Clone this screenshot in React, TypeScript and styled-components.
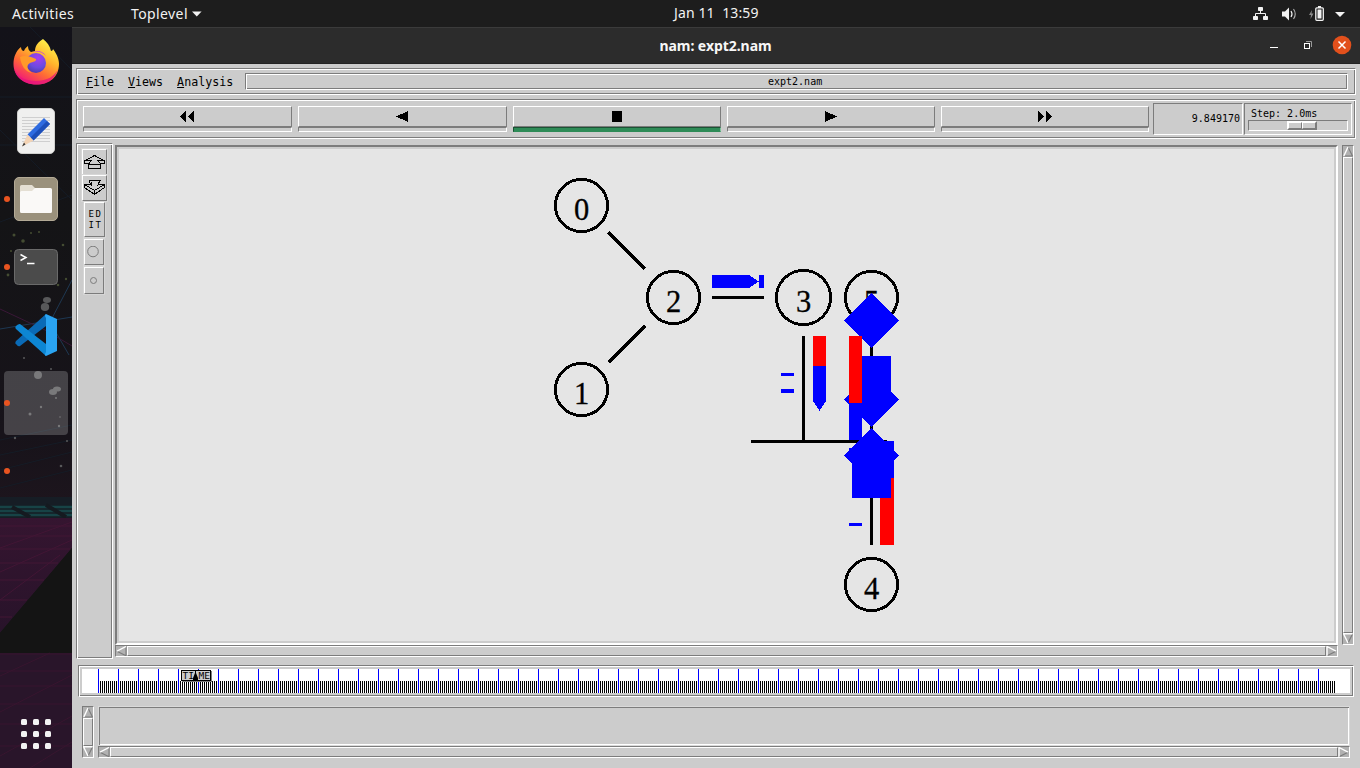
import React from "react";
import styled, { createGlobalStyle, css } from "styled-components";

const FACE = "#cccccc";
const DARK = "#7c7c7c";
const LIGHT = "#ffffff";

const GlobalStyle = createGlobalStyle`
  * { box-sizing: border-box; }
  html, body { margin: 0; padding: 0; overflow: hidden; }
  svg { display: block; flex: none; }
`;

const groove = css`
  border: 1px solid;
  border-color: ${DARK} ${LIGHT} ${LIGHT} ${DARK};
  box-shadow: inset 1px 1px ${LIGHT}, inset -1px -1px ${DARK};
`;
const raised = css`
  border: 1px solid;
  border-color: ${LIGHT} ${DARK} ${DARK} ${LIGHT};
`;
const sunken = css`
  border: 1px solid;
  border-color: ${DARK} ${LIGHT} ${LIGHT} ${DARK};
`;
const tiny = css`
  font: 10px/10px "DejaVu Sans Mono", monospace;
  white-space: pre;
  color: #000;
`;

const Desktop = styled.div`
  width: 1360px;
  height: 768px;
  display: flex;
  flex-direction: column;
  background: #141414;
  font-family: "Noto Sans", sans-serif;
`;

const TopBar = styled.header`
  height: 27px;
  flex: none;
  display: grid;
  grid-template-columns: 131px 543px 1fr auto;
  align-items: center;
  background: #1d1d1d;
  color: #f2f2f2;
  font-size: 14px;
  line-height: 26px;
  white-space: pre;
`;
const Activities = styled.span`
  padding-left: 12px;
  letter-spacing: 0.38px;
`;
const AppMenu = styled.span`
  display: flex;
  align-items: center;
  gap: 4px;
  letter-spacing: 0.4px;
`;
const Clock = styled.span`
  letter-spacing: 0.12px;
  line-height: 25px;
  margin-top: -2px;
`;
const Tray = styled.span`
  display: flex;
  align-items: center;
  padding-right: 15px;
`;

const Below = styled.div`
  flex: 1;
  display: flex;
  min-height: 0;
`;

const Dock = styled.nav`
  position: relative;
  width: 72px;
  flex: none;
  display: flex;
  flex-direction: column;
  padding-top: 1px;
  overflow: hidden;
`;
const Wallpaper = styled.svg`
  position: absolute;
  left: 0;
  top: 0;
`;
const DockItem = styled.div<{ $running?: boolean; $first?: boolean }>`
  position: relative;
  height: 68px;
  flex: none;
  margin-bottom: ${(p) => (p.$first ? 1 : 0)}px;
  display: flex;
  align-items: center;
  justify-content: center;
  ${(p) =>
    p.$running &&
    css`
      &::before {
        content: "";
        position: absolute;
        z-index: 1;
        left: 4px;
        top: 31px;
        width: 6px;
        height: 6px;
        border-radius: 3px;
        background: #e95420;
      }
    `}
`;
const Highlight = styled.div`
  width: 64px;
  height: 64px;
  border-radius: 4px;
  background: rgba(255, 255, 255, 0.2);
`;
const AppsGrid = styled.div`
  position: relative;
  margin: auto auto 19px;
  display: grid;
  grid-template-columns: repeat(3, 6px);
  gap: 6px;
`;
const AppsDot = styled.i`
  width: 6px;
  height: 6px;
  border-radius: 1.5px;
  background: #f2f2f2;
`;

const Window = styled.main`
  flex: 1;
  display: flex;
  flex-direction: column;
  background: ${FACE};
`;
const TitleBar = styled.div`
  height: 37px;
  flex: none;
  display: grid;
  grid-template-columns: 1fr auto 1fr;
  align-items: center;
  background: #2c2c2c;
  border-top: 1px solid #3b3b3b;
  border-bottom: 1px solid #232323;
  color: #f7f7f7;
`;
const Title = styled.h1`
  grid-column: 2;
  margin: 0 1px 0 0;
  font-size: 14px;
  line-height: 34px;
  font-weight: 700;
  letter-spacing: -0.05px;
`;
const Controls = styled.div`
  display: flex;
  justify-content: flex-end;
  align-items: center;
  padding-right: 8px;
`;

const Body = styled.div`
  flex: 1;
  display: flex;
  flex-direction: column;
  padding: 4px 4px 0;
`;
const MenuBar = styled.div`
  ${groove}
  height: 27px;
  flex: none;
  display: flex;
  align-items: center;
  padding: 0 7px 0 9px;
`;
const Menu = styled.span`
  font: 11.65px/15px "DejaVu Sans Mono", monospace;
  margin-right: 14px;
  padding-top: 2px;
  color: #000;
`;
const FileLabel = styled.div`
  ${groove}
  ${tiny}
  flex: 1;
  height: 17px;
  margin-left: -2px;
  padding: 1px 3px 0 0;
  text-align: center;
  line-height: 14px;
`;

const Toolbar = styled.div`
  ${groove}
  height: 40px;
  flex: none;
  display: flex;
  margin-top: 4px;
  padding: 3px 3px 0 6px;
`;
const Buttons = styled.div`
  display: grid;
  grid-template-columns: 209px 209px 208px 208px 208px;
  gap: 6px;
  padding-top: 3px;
  margin-right: 4px;
`;
const Transport = styled.div`
  height: 26px;
`;
const TransportFace = styled.div`
  ${raised}
  height: 21px;
  display: flex;
  align-items: center;
  justify-content: center;
  padding-right: 1px;
`;
const TransportStrip = styled.div<{ $active?: boolean }>`
  ${sunken}
  height: 5px;
  ${(p) =>
    p.$active &&
    css`
      background: #2e8b57;
      border-color: #1b5334 #82c09c #2e8b57 #1b5334;
    `}
`;
const TimeBox = styled.div`
  ${sunken}
  ${tiny}
  width: 90px;
  height: 32px;
  padding: 10px 2px 0 0;
  text-align: right;
`;
const StepBox = styled.div`
  ${sunken}
  ${tiny}
  width: 108px;
  height: 32px;
  margin-left: 1px;
  padding: 5px 3px 0;
`;
const StepText = styled.div`
  padding-left: 3px;
  height: 11px;
`;
const Trough = styled.div`
  ${sunken}
  width: 100px;
  height: 11px;
  padding-left: 38px;
`;
const Thumb = styled.div`
  display: flex;
  width: 30px;
  height: 9px;
  border: 1px solid;
  border-color: ${LIGHT} ${DARK} ${DARK} ${LIGHT};
`;
const ThumbHalf = styled.i`
  ${raised}
  flex: 1;
`;

const Workspace = styled.div`
  display: flex;
  height: 516px;
  flex: none;
  margin-top: 4px;
`;
const ToolPanel = styled.aside`
  ${groove}
  width: 37px;
  padding-top: 5px;
  display: flex;
  flex-direction: column;
  align-items: flex-start;
`;
const ToolButton = styled.div<{ $w: number; $h: number; $x: number; $gap?: number }>`
  ${raised}
  ${tiny}
  width: ${(p) => p.$w}px;
  height: ${(p) => p.$h}px;
  margin: ${(p) => p.$gap ?? 0}px 0 0 ${(p) => p.$x}px;
  display: flex;
  align-items: center;
  justify-content: center;
  box-shadow: 0 0 0 1px #d6d6d6;
`;
const EditLabel = styled.span`
  padding-left: 2px;
  line-height: 11px;
  font-size: 9px;
  letter-spacing: 1.6px;
`;
const CanvasColumn = styled.section`
  margin: 2px 4px 0 2px;
  width: 1223px;
`;
const Canvas = styled.div`
  height: 500px;
  border: 2px solid;
  border-color: ${DARK} ${LIGHT} ${LIGHT} ${DARK};
  padding: 2px;
`;
const Topology = styled.svg`
  background: #e5e5e5;
`;

const Bar = styled.div<{ $vertical?: boolean; $size: number }>`
  ${sunken}
  background: #b1b1b1;
  display: flex;
  flex: none;
  flex-direction: ${(p) => (p.$vertical ? "column" : "row")};
  width: ${(p) => (p.$vertical ? 12 : p.$size)}px;
  height: ${(p) => (p.$vertical ? p.$size : 12)}px;
`;
const BarThumb = styled.div`
  ${raised}
  flex: 1;
  background: ${FACE};
`;
const MainVertical = styled.div`
  margin-top: 2px;
`;

const Timeline = styled.div`
  ${groove}
  width: 1276px;
  height: 32px;
  flex: none;
  margin: 6px 0 0 2px;
  padding: 3px;
`;
const TimelineFace = styled.div`
  position: relative;
  height: 24px;
  background: #fff;
  padding-left: 16px;
`;
const Ticks = styled.div`
  width: 1237px;
  height: 24px;
  background:
    repeating-linear-gradient(90deg, #0000ff 0 1px, transparent 1px 20px),
    repeating-linear-gradient(90deg, #000 0 1px, transparent 1px 2px) 0 12px / 100% 12px no-repeat;
`;
const TimeMarker = styled.div`
  position: absolute;
  left: 99px;
  top: 1px;
`;

const Footer = styled.div`
  display: flex;
  gap: 4px;
  margin: 9px 0 0 6px;
`;
const NotePane = styled.div`
  width: 1252px;
  height: 40px;
  border: 1px solid #d9d9d9;
  box-shadow: inset 1px 1px ${DARK}, inset -1px -1px ${LIGHT};
`;

type Dir = "left" | "right" | "up" | "down";
const arrows: Record<Dir, [string, string]> = {
  left: ["M10 0.5 L1 5.2", "M1 5.2 L10 9.8 V0.5"],
  right: ["M1 9.8 V0.5 L10 5.2", "M10 5.2 L1 9.8"],
  up: ["M0.8 10 L5 1", "M5 1 L9.5 10 H0.8"],
  down: ["M9.5 0.8 H0.5 L5 10", "M5 10 L9.5 1"],
};
function Arrow({ dir }: { dir: Dir }) {
  const wide = dir === "left" || dir === "right";
  return (
    <svg width={wide ? 11 : 10} height={wide ? 10 : 11} fill="none" strokeWidth="1.1">
      <path d={arrows[dir][1]} stroke={DARK} />
      <path d={arrows[dir][0]} stroke={LIGHT} strokeWidth="1.4" />
    </svg>
  );
}
function Scrollbar({ vertical, size }: { vertical?: boolean; size: number }) {
  return (
    <Bar $vertical={vertical} $size={size}>
      <Arrow dir={vertical ? "up" : "left"} />
      <BarThumb />
      <Arrow dir={vertical ? "down" : "right"} />
    </Bar>
  );
}

const transports = [
  { id: "rewind", d: "M0 5.5 L6 0 V11Z M8 5.5 L14 0 V11Z", w: 14 },
  { id: "back", d: "M0 5.5 L12 0 V11Z", w: 12 },
  { id: "stop", d: "M0 0H10V11H0Z", w: 10, active: true },
  { id: "play", d: "M12 5.5 L0 0 V11Z", w: 12 },
  { id: "forward", d: "M6 5.5 L0 0 V11Z M14 5.5 L8 0 V11Z", w: 14 },
];

const nodes = [
  { id: "0", x: 581.5, y: 205.5, r: 26.1 },
  { id: "1", x: 581.5, y: 389.5, r: 26.1 },
  { id: "2", x: 673.5, y: 297.5, r: 26.1 },
  { id: "3", x: 803.5, y: 297.5, r: 27.1 },
  { id: "5", x: 871.5, y: 297.5, r: 26.1 },
  { id: "4", x: 871.5, y: 584.5, r: 26.1 },
];

const diamond = (cy: number) => `M871.5 ${cy - 27.5}L899 ${cy}L871.5 ${cy + 27.5}L844 ${cy}Z`;

function Network() {
  return (
    <Topology width="1215" height="492" viewBox="119 149 1215 492" shapeRendering="crispEdges">
      <g fill="none" stroke="#000" strokeWidth="2.9">
        {nodes.map((n) => (
          <circle key={n.id} cx={n.x} cy={n.y} r={n.r} />
        ))}
      </g>
      <g stroke="#000" strokeWidth="3">
        <path d="M608.5 232.5L645 269M608.5 362.5L645 326M712 297.5H764M803.5 336V441M751 441.5H887M871.5 336V545" />
      </g>
      <g fontFamily='"Liberation Serif", serif' fontSize="30.5" textAnchor="middle" stroke="#000" strokeWidth="0.3">
        {nodes.map((n) => (
          <text key={n.id} x={n.x} y={n.y + 14.5}>
            {n.id}
          </text>
        ))}
      </g>
      <g fill="#0000ff">
        <path d="M712 275H749L759 281.5L749 288H712Z" />
        <rect x="759" y="275" width="5" height="13" />
        <path d="M813 366H826V401L819.5 411L813 401Z" />
        <rect x="781" y="373" width="13" height="3" />
        <rect x="781" y="389" width="13" height="4" />
        <rect x="849" y="523" width="13" height="3" />
        <path d={diamond(320.5)} />
        <rect x="852" y="356" width="39" height="39" />
        <path d={diamond(399.5)} />
        <rect x="849" y="403" width="13" height="37" />
        <rect x="849" y="448" width="13" height="8" />
        <rect x="880" y="441" width="14" height="37" />
      </g>
      <g fill="#ff0000">
        <rect x="813" y="336" width="13" height="30" />
        <rect x="849" y="336" width="13" height="67" />
        <rect x="880" y="478" width="14" height="67" />
      </g>
      <g fill="#0000ff">
        <path d={diamond(455.5)} />
        <rect x="852" y="459" width="39" height="39" />
      </g>
    </Topology>
  );
}

function DockWallpaper() {
  return (
    <Wallpaper width="72" height="741" viewBox="0 27 72 741">
      <defs>
        <linearGradient id="sky" x1="0" y1="0" x2="0" y2="1">
          <stop offset="0" stopColor="#131219" />
          <stop offset="0.4" stopColor="#141416" />
          <stop offset="0.85" stopColor="#17131a" />
          <stop offset="1" stopColor="#1d151d" />
        </linearGradient>
        <linearGradient id="floor" x1="0" y1="0" x2="0" y2="1">
          <stop offset="0" stopColor="#351530" />
          <stop offset="1" stopColor="#28132a" />
        </linearGradient>
      </defs>
      <rect y="27" width="72" height="741" fill="#141414" />
      <rect y="27" width="72" height="480" fill="url(#sky)" />
      <g stroke="#151c26" strokeWidth="1" fill="none">
        <path d="M0 97H72M0 145H72M30 27L72 70M0 130L72 200M0 440L72 425M0 455L72 440M0 470L72 452M0 488L72 470M0 222L72 195" />
      </g>
      <path d="M72 280L50 322L69 355M0 329L72 317" stroke="#1e3852" fill="none" />
      <path d="M0 309L45 330L72 346" stroke="#3a1838" fill="none" />
      <g fill="#444c32">
        <circle cx="14" cy="235" r="1.5" />
        <circle cx="23" cy="241" r="1.8" />
        <circle cx="39" cy="232" r="1" />
        <circle cx="63" cy="245" r="1.3" />
        <circle cx="11" cy="251" r="1" />
        <circle cx="66" cy="279" r="1.2" />
        <circle cx="58" cy="285" r="1.3" />
        <circle cx="8" cy="275" r="1.4" />
        <circle cx="31" cy="233" r="1" />
      </g>
      <g fill="#58585a">
        <ellipse cx="47" cy="300" rx="4" ry="3" />
        <ellipse cx="45" cy="307" rx="4.2" ry="4" />
        <ellipse cx="38" cy="375" rx="4" ry="4" />
        <ellipse cx="57" cy="389" rx="4" ry="2.6" />
        <ellipse cx="53" cy="392" rx="4" ry="3" />
        <circle cx="30" cy="414" r="1.5" />
        <circle cx="41" cy="407" r="1.2" />
        <circle cx="59" cy="426" r="1.2" />
        <circle cx="56" cy="398" r="1" />
        <circle cx="60" cy="417" r="0.8" />
        <circle cx="15" cy="438" r="1.2" />
        <circle cx="61" cy="466" r="1.3" />
        <circle cx="67" cy="441" r="1" />
        <circle cx="24" cy="358" r="1" />
        <circle cx="51" cy="369" r="1" />
      </g>
      <rect y="497" width="72" height="21" fill="#161d25" />
      <path d="M0 507H72M0 511H72M0 515H72" stroke="#174346" strokeWidth="2.4" />
      <path d="M12 507L30 517M46 505L66 517" stroke="#151a20" strokeWidth="4" />
      <path d="M0 518H72V548L0 633Z" fill="url(#floor)" />
      <path d="M0 526H72M0 536H72M0 549H70M0 563H58M0 580H44M0 600H27M0 617H12M0 548L72 522M0 572L72 540M0 600L60 555" stroke="#421635" strokeWidth="1" />
      <path d="M0 633L72 548V653H0Z" fill="#141414" />
      <rect y="653" width="72" height="115" fill="#29152a" />
      <path d="M0 654H72M0 671H72M0 686H72M0 704H72M0 724H72M0 746H72M0 676L50 653M0 712L72 675M0 756L72 716M30 768L72 742" stroke="#38152f" strokeWidth="1" fill="none" />
    </Wallpaper>
  );
}

function Firefox() {
  return (
    <svg width="46" height="48" viewBox="0 0 46 48">
      <defs>
        <linearGradient id="fx" x1="0.85" y1="0.1" x2="0.3" y2="1">
          <stop offset="0" stopColor="#fff24a" />
          <stop offset="0.35" stopColor="#ffb52c" />
          <stop offset="0.65" stopColor="#ff6a35" />
          <stop offset="1" stopColor="#f0147c" />
        </linearGradient>
        <radialGradient id="fxg" cx="0.6" cy="0.25" r="0.8">
          <stop offset="0" stopColor="#a93cf0" />
          <stop offset="0.6" stopColor="#6a4be0" />
          <stop offset="1" stopColor="#4a3aa8" />
        </radialGradient>
      </defs>
      <path
        d="M30 1C34 4 37 8 38 13C39 13 40 12 40 11C43 15 46 20 46 26C46 39 36 46.500 23.500 46.500C10 46.500 0.500 38 0.500 26C0.500 19 3 13 8 9C8 11 9 13 11 13C12 10 14 9 15 8C15 11 16 13 18 14L22 13C22 8 25 4 30 1Z"
        fill="url(#fx)"
      />
      <path d="M0.800 29C3 38 11 43 23 43C34 43 42 38 45 31C42 42 34 46.500 23.500 46.500C11 46.500 2 39 0.800 29Z" fill="#e6137f" opacity="0.75" />
      <circle cx="23" cy="25" r="10" fill="url(#fxg)" />
      <path d="M7 19C11 17 17 18 23 21C24 23 20 24 17 25C13 27 14 32 19 35C12 34 8 27 7 19Z" fill="#ff9a2a" />
      <path d="M16 15C20 13 28 12 33 18C31 15 29 13 22 13Z" fill="#c13ce0" />
    </svg>
  );
}
function TextEditor() {
  return (
    <svg width="38" height="46" viewBox="0 0 38 46">
      <rect x="0.500" y="0.500" width="37" height="45" rx="4.500" fill="#f0f0ef" stroke="#d0d0ce" />
      <path d="M5 9.500H33M5 12.500H33M5 15.500H33M5 18.500H33M5 21.500H33M5 24.500H33M5 27.500H33M5 30.500H33M5 33.500H33" stroke="#cfcfcf" />
      <path d="M27 10L33 16L16.500 32.500L10.500 26.500Z" fill="#2e6be0" />
      <path d="M30 13L33 16L16.500 32.500L13.500 29.500Z" fill="#1d4fb8" />
      <path d="M10.500 26.500L16.500 32.500L5 38.500Z" fill="#f3d3b4" />
      <path d="M7 34.500L8.500 36.500L5 38.500Z" fill="#3a3a3a" />
    </svg>
  );
}
function Files() {
  return (
    <svg width="44" height="44" viewBox="0 0 44 44">
      <rect x="0.500" y="0.500" width="43" height="43" rx="4.500" fill="#9a917c" stroke="#b3aa96" />
      <path d="M6 12V9.500Q6 8 7.500 8H18L21 11H30V16H6Z" fill="#e4dfd3" />
      <path d="M6 15.500Q6 14 7.500 14H18L21 11H36.500Q38 11 38 12.500V34.500Q38 36 36.500 36H7.500Q6 36 6 34.500Z" fill="#faf9f7" />
    </svg>
  );
}
function Terminal() {
  return (
    <svg width="44" height="36" viewBox="0 0 44 36">
      <rect x="0.500" y="0.500" width="43" height="35" rx="4" fill="#4b4b4b" stroke="#6a6a6a" />
      <path d="M6.500 5.500L12 8.500L6.500 11.500M13 14.500H20.500" stroke="#fff" strokeWidth="1.500" fill="none" />
    </svg>
  );
}
function VsCode() {
  return (
    <svg width="42" height="42" viewBox="0 0 42 42">
      <path d="M31 0V12L5 32Q3 33 0.500 29.500Q0 28 1 27Z" fill="#0a6ab6" />
      <path d="M31 42V30L5 10Q3 9.500 0.500 12.500Q0 14 1 15Z" fill="#0d86d3" />
      <path d="M31 0L42 5V37L31 42Q29 41 31 38V4Q29 1 31 0Z" fill="#2aa4f2" />
    </svg>
  );
}

function App() {
  return (
    <Desktop>
      <GlobalStyle />
      <TopBar>
        <Activities>Activities</Activities>
        <AppMenu>
          Toplevel
          <svg width="10" height="6">
            <path d="M0 0.500H9.600L4.800 5.500Z" fill="#f2f2f2" />
          </svg>
        </AppMenu>
        <Clock>Jan 11  13:59</Clock>
        <Tray>
          <svg width="92" height="26" viewBox="1253 0 92 26" fill="none">
            <g fill="#f2f2f2">
              <rect x="1258" y="6" width="5" height="4" rx="0.800" />
              <rect x="1253" y="15" width="5" height="4" rx="0.800" />
              <rect x="1263" y="15" width="5" height="4" rx="0.800" />
            </g>
            <path d="M1260.500 10V12.500M1255.500 15.500V12.500H1265.500V15.500" stroke="#f2f2f2" />
            <path d="M1282 10.500H1285L1289 6.500V19.500L1285 15.500H1282Z" fill="#f2f2f2" />
            <path d="M1291 10Q1293 13 1291 16" stroke="#f2f2f2" strokeWidth="1.200" />
            <path d="M1293.500 8Q1297 13 1293.500 18" stroke="#b0b0b0" strokeWidth="1.100" />
            <path d="M1312 9L1309 14H1311L1310.500 18L1313.500 12.500H1311.500Z" fill="#8c8c8c" />
            <rect x="1315.800" y="6.800" width="7.500" height="12.500" rx="1" stroke="#f2f2f2" strokeWidth="1.300" />
            <rect x="1318" y="5" width="3" height="2" fill="#f2f2f2" />
            <rect x="1317.500" y="8.500" width="4" height="9" fill="#f2f2f2" />
            <path d="M1335 11H1345L1340 16Z" fill="#f2f2f2" />
          </svg>
        </Tray>
      </TopBar>
      <Below>
        <Dock>
          <DockWallpaper />
          <DockItem $first><Firefox /></DockItem>
          <DockItem><TextEditor /></DockItem>
          <DockItem $running><Files /></DockItem>
          <DockItem $running><Terminal /></DockItem>
          <DockItem><VsCode /></DockItem>
          <DockItem $running><Highlight /></DockItem>
          <DockItem $running />
          <AppsGrid>
            {Array.from({ length: 9 }, (_, i) => (
              <AppsDot key={i} />
            ))}
          </AppsGrid>
        </Dock>
        <Window>
          <TitleBar>
            <Title>nam: expt2.nam</Title>
            <Controls>
              <svg width="82" height="22" viewBox="1270 35 82 22" fill="none">
                <rect x="1270" y="47" width="8" height="1" fill="#fff" />
                <path d="M1306 41.500H1311.500V47" stroke="#9a9a9a" />
                <rect x="1304.500" y="43.500" width="5" height="5" stroke="#fff" />
                <circle cx="1342" cy="45" r="9.300" fill="#e2501c" />
                <path d="M1338.500 41.500L1345.500 48.500M1345.500 41.500L1338.500 48.500" stroke="#fff" strokeWidth="1.500" />
              </svg>
            </Controls>
          </TitleBar>
          <Body>
            <MenuBar>
              <Menu><u>F</u>ile</Menu>
              <Menu><u>V</u>iews</Menu>
              <Menu><u>A</u>nalysis</Menu>
              <FileLabel>expt2.nam</FileLabel>
            </MenuBar>
            <Toolbar>
              <Buttons>
                {transports.map((t) => (
                  <Transport key={t.id}>
                    <TransportFace>
                      <svg width={t.w} height="11" shapeRendering="crispEdges">
                        <path d={t.d} />
                      </svg>
                    </TransportFace>
                    <TransportStrip $active={t.active} />
                  </Transport>
                ))}
              </Buttons>
              <TimeBox>9.849170</TimeBox>
              <StepBox>
                <StepText>Step: 2.0ms</StepText>
                <Trough>
                  <Thumb>
                    <ThumbHalf />
                    <ThumbHalf />
                  </Thumb>
                </Trough>
              </StepBox>
            </Toolbar>
            <Workspace>
              <ToolPanel>
                <ToolButton $w={25} $h={26} $x={5}>
                  <svg width="21" height="15" fill="none" stroke="#000" shapeRendering="crispEdges">
                    <path d="M10.500 0.500L5 3.500L0.500 6V8.500H5.500M10.500 0.500L16 3.500L20.500 6V8.500H15.500M0.500 5.500H7L4.500 9M20.500 5.500H14L16.500 9M4.500 9.500H16.500V13.500H4.500Z" />
                  </svg>
                </ToolButton>
                <ToolButton $w={25} $h={26} $x={5}>
                  <svg width="21" height="16" fill="none" stroke="#000" shapeRendering="crispEdges">
                    <path d="M5 0.500H16L14 5L20.500 4.500V7.500L10.500 14.500L0.500 7.500V4.500L7 5L5 0.500M0.500 4.500L10.500 10.500L20.500 4.500M10.500 10.500V14M7 4.500V1.500M14 4.500V1.500" />
                  </svg>
                </ToolButton>
                <ToolButton $w={21} $h={35} $x={7} $gap={1}>
                  <EditLabel>{"ED\nIT"}</EditLabel>
                </ToolButton>
                <ToolButton $w={20} $h={26} $x={7} $gap={2}>
                  <svg width="14" height="13" fill="none" stroke={DARK}>
                    <circle cx="6" cy="5.500" r="5.300" />
                  </svg>
                </ToolButton>
                <ToolButton $w={20} $h={27} $x={7} $gap={2}>
                  <svg width="8" height="8" fill="none" stroke={DARK}>
                    <circle cx="3.500" cy="3.500" r="3" />
                  </svg>
                </ToolButton>
              </ToolPanel>
              <CanvasColumn>
                <Canvas>
                  <Network />
                </Canvas>
                <Scrollbar size={1223} />
              </CanvasColumn>
              <MainVertical>
                <Scrollbar vertical size={500} />
              </MainVertical>
            </Workspace>
            <Timeline>
              <TimelineFace>
                <Ticks />
                <TimeMarker>
                  <svg width="31" height="12" viewBox="0 0 31 12">
                    <rect x="1" y="1" width="30" height="11" fill={DARK} />
                    <rect x="0.500" y="0.500" width="29" height="10" fill={FACE} stroke="#000" />
                    <g fontFamily='"DejaVu Sans Mono", monospace' fontSize="9.500">
                      <text x="1.500" y="8.800">TI</text>
                      <text x="17.500" y="8.800">ME</text>
                    </g>
                    <path d="M14 0H15V3L17 8V11H12V8L14 3Z" />
                  </svg>
                </TimeMarker>
              </TimelineFace>
            </Timeline>
            <Footer>
              <Scrollbar vertical size={52} />
              <div>
                <NotePane />
                <Scrollbar size={1252} />
              </div>
            </Footer>
          </Body>
        </Window>
      </Below>
    </Desktop>
  );
}

export default App;
